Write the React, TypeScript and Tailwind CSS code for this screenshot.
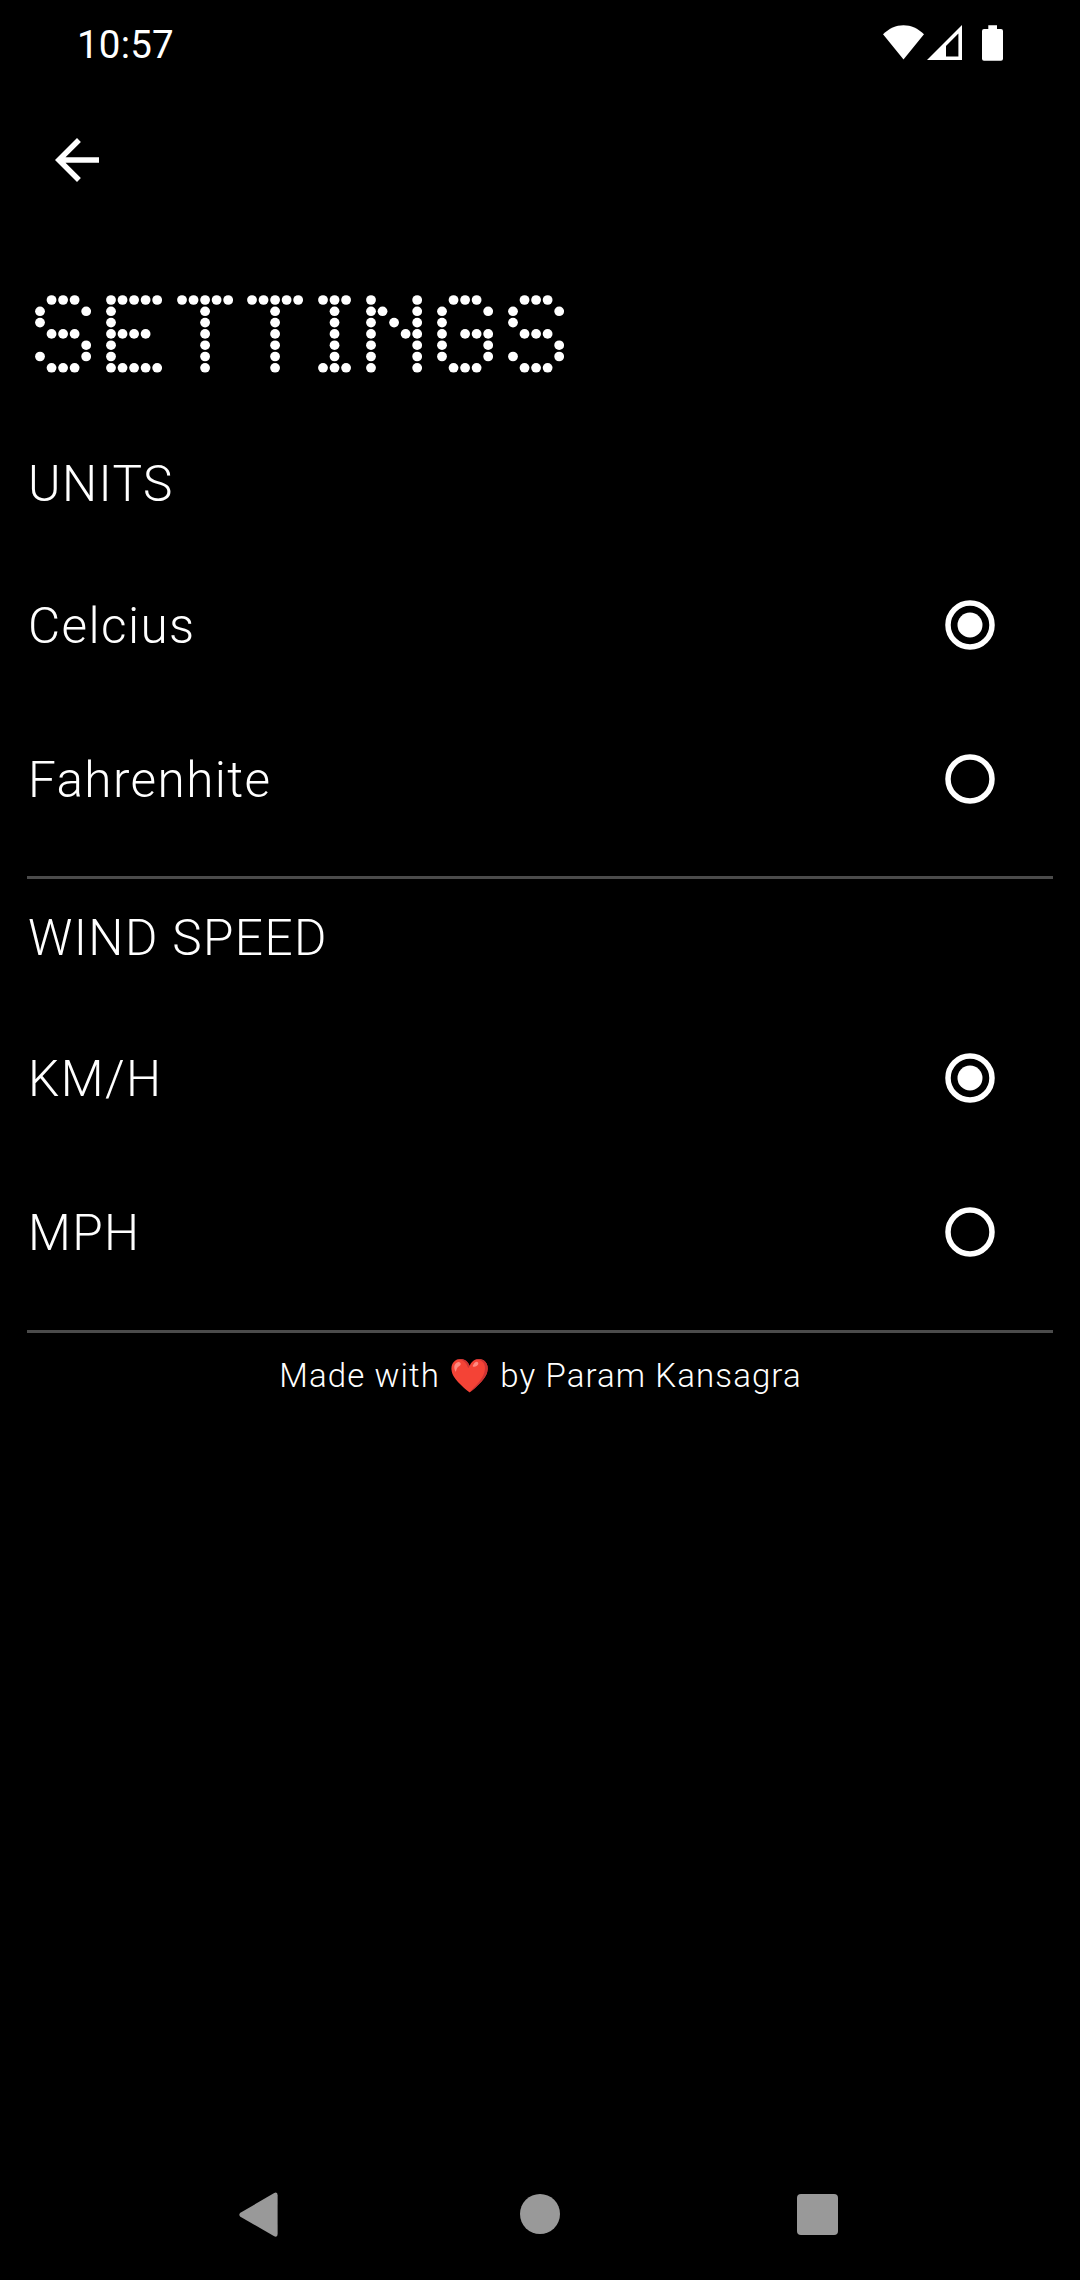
import React from "react";

const GLYPHS: Record<string, string[]> = {
  S: [".###.", "#...#", "#....", ".###.", "....#", "#...#", ".###."],
  E: ["#####", "#....", "#....", "####.", "#....", "#....", "#####"],
  T: ["#####", "..#..", "..#..", "..#..", "..#..", "..#..", "..#.."],
  I: ["###", ".#.", ".#.", ".#.", ".#.", ".#.", "###"],
  N: ["#...#", "##..#", "#.#.#", "#..##", "#...#", "#...#", "#...#"],
  G: [".###.", "#...#", "#....", "#.###", "#...#", "#...#", ".###."],
};

const PITCH_X = 11.54;
const PITCH_Y = 11.3;

function DotLetter({ char }: { char: string }) {
  const rows = GLYPHS[char];
  const width = (rows[0].length - 1) * PITCH_X + 10;
  return (
    <svg width={width} height="78" viewBox={`0 0 ${width} 78`} fill="white" aria-hidden="true">
      {rows.flatMap((row, y) =>
        [...row].map((cell, x) =>
          cell === "#" ? (
            <ellipse key={`${x}-${y}`} cx={5 + x * PITCH_X} cy={5 + y * PITCH_Y} rx="4.9" ry="4.8" />
          ) : null
        )
      )}
    </svg>
  );
}

function DotTitle({ text }: { text: string }) {
  return (
    <h1 aria-label={text} className="flex h-[78px] gap-[14.74px] pl-[7.8px]">
      {[...text].map((c, i) => (
        <DotLetter key={i} char={c} />
      ))}
    </h1>
  );
}

function StatusBar() {
  return (
    <div className="flex h-[88px] items-start justify-between pr-[77px] pl-[77px]">
      <span className="mt-[22px] text-[38.5px] leading-[45px] tracking-[0.2px]">10:57</span>
      <div className="mt-[25px] flex items-start">
        <svg width="41" height="35" viewBox="0 0 41 35" fill="white">
          <path d="M0 9.3C6 3.3 13 0.2 20.5 0.2S35 3.3 41 9.3L20.5 34.6z" />
        </svg>
        <svg className="ml-[3px]" width="35" height="35" viewBox="0 0 35 35" fill="white">
          <path fillRule="evenodd" d="M0 35L35 0V35zM19 31.5H31.4V8.6L19 21z" />
        </svg>
        <svg className="ml-[20px]" width="21" height="36" viewBox="0 0 21 36" fill="white">
          <path d="M6.3 0.3H15V4H19a2 2 0 0 1 2 2V33.7a2 2 0 0 1-2 2H2a2 2 0 0 1-2-2V6a2 2 0 0 1 2-2H6.3z" />
        </svg>
      </div>
    </div>
  );
}

function RadioRow({ label, selected = false }: { label: string; selected?: boolean }) {
  return (
    <div role="radio" aria-checked={selected} className="flex h-[154px] items-center justify-between pr-[58px]">
      <span className="pt-[2px]">{label}</span>
      <svg width="50" height="50" viewBox="-25 -25 50 50">
        <circle r="22" fill="none" stroke="white" strokeWidth="5.5" />
        {selected && <circle r="12.5" fill="white" />}
      </svg>
    </div>
  );
}

function Section({ title, options }: { title: string; options: string[] }) {
  return (
    <section className="flex h-[453.75px] flex-col border-b-[3px] border-[#4b4b4b] text-[49.5px] leading-[58px] font-light tracking-[1.4px]">
      <h2 className="mt-[30px] mb-[34.7px] pl-px font-light">{title}</h2>
      <div className="flex flex-col pl-px">
        {options.map((o, i) => (
          <RadioRow key={o} label={o} selected={i === 0} />
        ))}
      </div>
    </section>
  );
}

export default function App() {
  return (
    <div className="flex h-[2280px] w-[1080px] flex-col overflow-hidden bg-black font-['Roboto',sans-serif] text-white">
      <StatusBar />
      <div className="flex h-[144px] items-center px-[44px]">
        <svg width="66" height="66" viewBox="0 0 24 24" fill="white">
          <path d="M20 11H7.83l5.59-5.59L12 4l-8 8 8 8 1.41-1.41L7.83 13H20v-2z" />
        </svg>
      </div>
      <main className="flex flex-1 flex-col px-[27px] pt-[62.5px]">
        <DotTitle text="SETTINGS" />
        <div className="pt-[52.5px]">
          <Section title="UNITS" options={["Celcius", "Fahrenhite"]} />
          <Section title="WIND SPEED" options={["KM/H", "MPH"]} />
        </div>
        <p className="mt-[23.5px] pl-px text-center text-[33px] leading-[39px] font-light tracking-[1.1px]">
          Made with ❤️ by Param Kansagra
        </p>
      </main>
      <nav className="flex h-[132px] items-center justify-between pr-[242px] pl-[239px]">
        <svg className="mt-px" width="39" height="46" viewBox="0 0 39 46" fill="#999">
          <path d="M1.4 20.8L34.8 1.2Q38.6-0.6 38.6 3.2V42Q38.6 46 34.8 44L1.4 24.8Q-0.8 22.8 1.4 20.8z" />
        </svg>
        <span className="ml-[5px] size-[40px] rounded-full bg-[#999]" />
        <span className="size-[41px] rounded-[4px] bg-[#999]" />
      </nav>
    </div>
  );
}
